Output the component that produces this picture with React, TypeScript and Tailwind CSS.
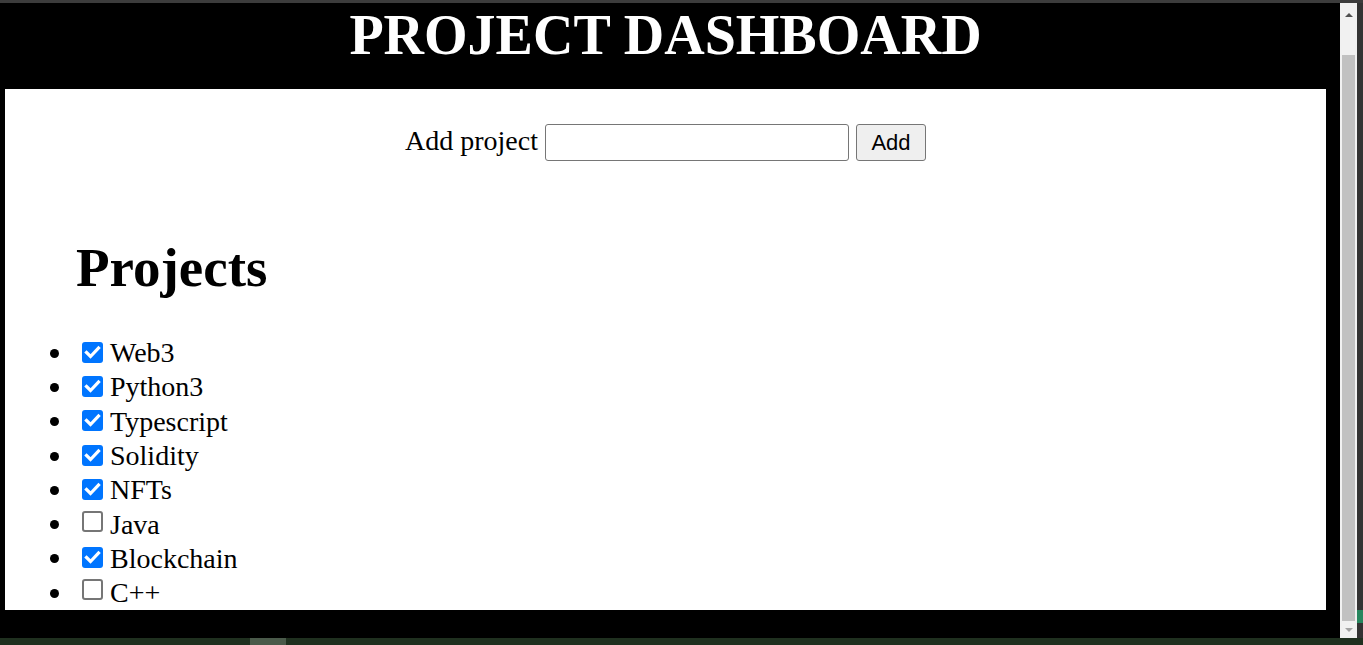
import React, { useState } from 'react'

interface Project {
  name: string
  done: boolean
}

const initialProjects: Project[] = [
  { name: "Web3", done: true },
  { name: "Python3", done: true },
  { name: "Typescript", done: true },
  { name: "Solidity", done: true },
  { name: "NFTs", done: true },
  { name: "Java", done: false },
  { name: "Blockchain", done: true },
  { name: "C++", done: false },
]

const Checkbox = ({ checked, onChange }: { checked: boolean; onChange: () => void }) => (
  <button
    type="button"
    onClick={onChange}
    className={
      checked
        ? "w-[21px] h-[21px] rounded-[3px] bg-[#0075ff] flex items-center justify-center shrink-0"
        : "w-[21px] h-[21px] rounded-[3px] bg-white border-[2px] border-[#767676] shrink-0"
    }
  >
    {checked && (
      <svg width="21" height="21" viewBox="0 0 21 21">
        <path d="M4.5 10.5 L8.5 14.5 L16.5 6" fill="none" stroke="white" strokeWidth="3.2" strokeLinecap="square" />
      </svg>
    )}
  </button>
)

const App = () => {
  const [projects, setProjects] = useState<Project[]>(initialProjects)
  const [newName, setNewName] = useState("")

  const toggle = (index: number) => {
    setProjects(prev => prev.map((p, i) => (i === index ? { ...p, done: !p.done } : p)))
  }

  const addProject = () => {
    if (!newName.trim()) return
    setProjects(prev => [...prev, { name: newName.trim(), done: false }])
    setNewName("")
  }

  return (
    <div className="w-[1363px] h-[645px] overflow-hidden bg-[#333333] flex flex-col">
      {/* window top edge */}
      <div className="h-[3px] bg-[#3c3c3c] shrink-0" />

      <div className="flex h-[635px] shrink-0">
        {/* page */}
        <main className="w-[1340px] bg-black pl-[5px] pr-[14px] flex flex-col font-['Liberation_Serif',serif]">
          {/* Header */}
          <header className="h-[86px] shrink-0 pt-[1px]">
            <h1 className="text-center text-white font-bold text-[56px] leading-[62px]">
              PROJECT DASHBOARD
            </h1>
          </header>

          {/* Content */}
          <div className="h-[521px] bg-white pt-[35px] shrink-0">
            <div className="flex justify-center items-center h-[37px] gap-[7px]">
              <label className="text-[28px] leading-[32px] text-black pb-[3px]">Add project</label>
              <input
                type="text"
                value={newName}
                onChange={(e) => setNewName(e.target.value)}
                className="w-[304px] h-[37px] border border-[#767676] rounded-[3px] px-2 text-[22px] outline-none"
              />
              <button
                onClick={addProject}
                className="w-[70px] h-[37px] border border-[#767676] rounded-[3px] bg-[#efefef] text-black text-[22px] font-['Liberation_Sans',Arial,sans-serif]"
              >
                Add
              </button>
            </div>

            <h2 className="mt-[75px] pl-[71px] font-bold text-[55px] leading-[64px] text-black">
              Projects
            </h2>

            <ul className="mt-[35px]">
              {projects.map((p, i) => (
                <li key={p.name + i} className="flex items-center h-[34.3px] text-black">
                  <span className="ml-[45px] mt-[2px] w-[9px] h-[9px] rounded-full bg-black shrink-0" />
                  <span className="ml-[23px]">
                    <Checkbox checked={p.done} onChange={() => toggle(i)} />
                  </span>
                  <span className="ml-[7px] text-[28px] leading-[28px] pt-[2px]">{p.name}</span>
                </li>
              ))}
            </ul>
          </div>
        </main>

        {/* scrollbar */}
        <div className="w-[17px] bg-[#f1f1f1] flex flex-col items-center shrink-0">
          <div className="h-[52px] w-full flex justify-center pt-[10px]">
            <div className="w-0 h-0 border-l-[4px] border-r-[4px] border-b-[4px] border-l-transparent border-r-transparent border-b-[#505050]" />
          </div>
          <div className="w-[13px] h-[566px] bg-[#c1c1c1]" />
          <div className="flex-1 w-full flex justify-center pt-[7px]">
            <div className="w-0 h-0 border-l-[4px] border-r-[4px] border-t-[4px] border-l-transparent border-r-transparent border-t-[#a3a3a3]" />
          </div>
        </div>

        {/* window right edge */}
        <div className="w-[6px] bg-[#333333] flex flex-col shrink-0">
          <div className="h-[607px]" />
          <div className="h-[13px] bg-[#27865e]" />
        </div>
      </div>

      {/* taskbar strip */}
      <div className="h-[7px] bg-[#1f301f] flex shrink-0">
        <div className="w-[250px]" />
        <div className="w-[36px] bg-[#4a5a4a]" />
      </div>
    </div>
  )
}

export default App
